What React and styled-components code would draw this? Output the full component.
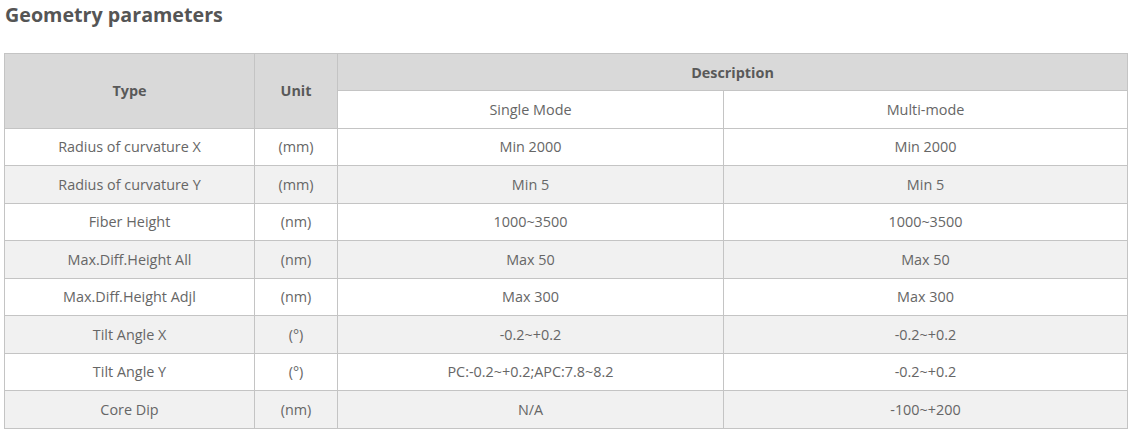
import React from "react"
import styled, { createGlobalStyle } from "styled-components"

const GlobalStyle = createGlobalStyle`
  body {
    margin: 0;
    background: #fff;
    font-family: "Open Sans", "Liberation Sans", sans-serif;
  }
`

const Page = styled.main`
  padding: 3px 11px 0 4px;
`

const Title = styled.h2`
  margin: 0 0 26px 1px;
  font-size: 19.7px;
  line-height: 24px;
  font-weight: 700;
  color: #555;
`

const Table = styled.table`
  width: 100%;
  border-collapse: collapse;
  table-layout: fixed;
  border: 1px solid #bbb;
  font-size: 14.4px;
  color: #666;
`

const Cell = styled.td`
  height: 36.5px;
  padding: 0;
  text-align: center;
  vertical-align: middle;
  border: 1px solid #c4c4c4;
`

const HeadCell = styled(Cell).attrs({ as: "th" })`
  height: 36px;
  background: #d9d9d9;
  font-weight: 700;
  color: #595959;
`

const SubHeadCell = styled(Cell).attrs({ as: "th" })`
  background: #fff;
  font-weight: 400;
`

const Row = styled.tr`
  background: ${props => (props.$shaded ? "#f1f1f1" : "#fff")};
`

const rows = [
  ["Radius of curvature X", "(mm)", "Min 2000", "Min 2000"],
  ["Radius of curvature Y", "(mm)", "Min 5", "Min 5"],
  ["Fiber Height", "(nm)", "1000~3500", "1000~3500"],
  ["Max.Diff.Height All", "(nm)", "Max 50", "Max 50"],
  ["Max.Diff.Height Adjl", "(nm)", "Max 300", "Max 300"],
  ["Tilt Angle X", "(°)", "-0.2~+0.2", "-0.2~+0.2"],
  ["Tilt Angle Y", "(°)", "PC:-0.2~+0.2;APC:7.8~8.2", "-0.2~+0.2"],
  ["Core Dip", "(nm)", "N/A", "-100~+200"],
]

export default function App() {
  return (
    <Page>
      <GlobalStyle />
      <Title>Geometry parameters</Title>
      <Table>
        <colgroup>
          <col style={{ width: 250 }} />
          <col style={{ width: 83 }} />
          <col style={{ width: 386 }} />
          <col />
        </colgroup>
        <thead>
          <tr>
            <HeadCell rowSpan={2}>Type</HeadCell>
            <HeadCell rowSpan={2}>Unit</HeadCell>
            <HeadCell colSpan={2}>Description</HeadCell>
          </tr>
          <tr>
            <SubHeadCell>Single Mode</SubHeadCell>
            <SubHeadCell>Multi-mode</SubHeadCell>
          </tr>
        </thead>
        <tbody>
          {rows.map((row, i) => (
            <Row key={row[0]} $shaded={i % 2 === 1}>
              {row.map((value, j) => (
                <Cell key={j}>{value}</Cell>
              ))}
            </Row>
          ))}
        </tbody>
      </Table>
    </Page>
  )
}
